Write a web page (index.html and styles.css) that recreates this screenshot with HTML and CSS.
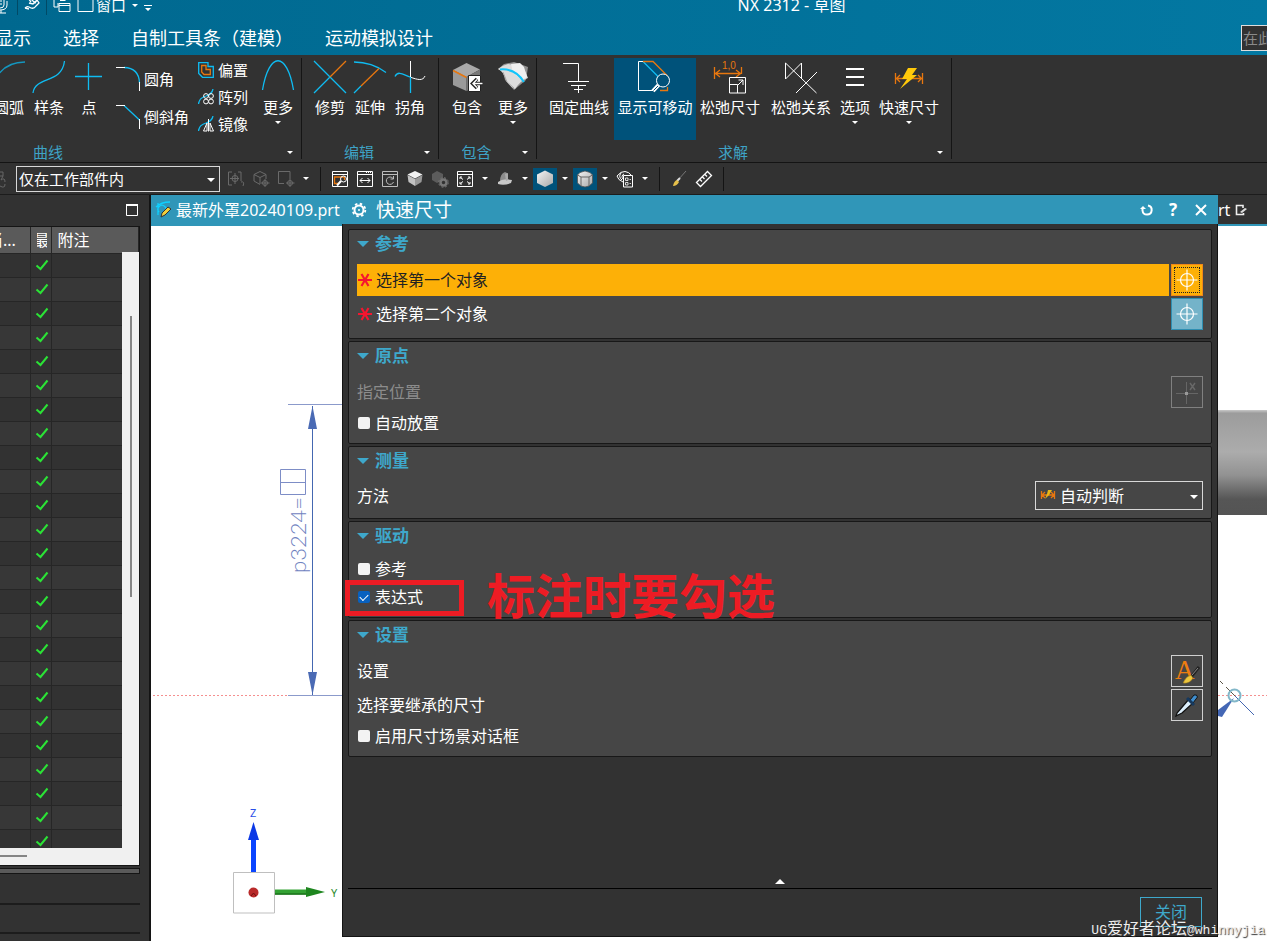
FILE: index.html
```html
<!DOCTYPE html>
<html lang="zh-CN">
<head>
<meta charset="utf-8">
<title>NX 2312 - 草图</title>
<link rel="stylesheet" href="styles.css">
</head>
<body>
<svg class="defs" aria-hidden="true">
  <defs>
    <symbol id="tick" viewBox="0 0 14 12"><path d="M1.500 6.500 L5.500 10 L12.500 1.500" fill="none" stroke="#2be336" stroke-width="2"/></symbol>
    <symbol id="required" viewBox="0 0 16 16"><path d="M1 8H15M4.500 2L11.500 14M11.500 2L4.500 14" fill="none" stroke="#f5152f" stroke-width="2.200"/></symbol>
    <symbol id="target" viewBox="0 0 22 22"><circle cx="11" cy="11" r="6.500" fill="none" stroke="#fff" stroke-width="1.200"/><path d="M0.500 11H21.500M11 0.500V21.500" stroke="#fff" stroke-width="1.200"/></symbol>
    <linearGradient id="shaft" x1="0" y1="0" x2="0" y2="1">
      <stop offset="0" stop-color="#c8c8c8"/><stop offset=".03" stop-color="#9c9c9c"/><stop offset=".4" stop-color="#acacac"/><stop offset=".62" stop-color="#929292"/><stop offset=".85" stop-color="#565656"/><stop offset="1" stop-color="#545454"/>
    </linearGradient>
    <linearGradient id="cube" x1="0" y1="0" x2="1" y2="1"><stop offset="0" stop-color="#f4f4f4"/><stop offset="1" stop-color="#a9a9a9"/></linearGradient>
  </defs>
</svg>

<header class="app-head">
  <div class="title-row">
    <button class="quick" aria-label="语音"><svg width="11" height="20" viewBox="0 0 11 20"><path d="M4 3v7q0 3 -4 3M7 6v4q0 5-7 5M-2 18H6M1 15v3M0 6h2M0 9h2" fill="none" stroke="#fff"/></svg></button>
    <i class="quick-sep"></i>
    <button class="quick" aria-label="选择方式"><svg width="16" height="20" viewBox="0 0 16 20"><path d="M1 13q2-2 4-1l2 1q3 1 5-2l3-3-2-3-4 4-4-1M4 3l3 4M10 1l3 4-2 3-4-4zM1 13l4 1" fill="none" stroke="#fff" stroke-width="1.300"/></svg></button>
    <i class="quick-sep"></i>
    <button class="quick" aria-label="切换窗口"><svg width="18" height="20" viewBox="0 0 18 20"><path d="M1 3v9h4M1 3h11v3M5 12V8M6 8.500h11v8H6zM6 10.500h11M7 5.500h5" fill="none" stroke="#fff"/></svg></button>
    <button class="quick quick-window"><svg width="17" height="20" viewBox="0 0 17 20"><path d="M1 3.500h15v13H1z" fill="none" stroke="#fff"/></svg><span>窗口</span><i class="caret"></i></button>
    <button class="quick" aria-label="更多命令"><svg width="8" height="20" viewBox="0 0 8 20"><path d="M0 10h8v1H0zM1 13h6L4 16z" fill="#fff"/></svg></button>
    <h1 class="app-title">NX 2312 - 草图</h1>
  </div>
  <nav class="menu-row">
    <div class="menu-list"><button>显示</button><button>选择</button><button>自制工具条（建模）</button><button>运动模拟设计</button></div>
    <input class="command-search" type="text" placeholder="在此键入命令" aria-label="搜索命令">
  </nav>
</header>

<section class="ribbon">
  <div class="group group-curve">
    <div class="group-items">
      <button class="tool w40"><svg viewBox="0 0 36 36"><path d="M3 22Q12 2 34 2" fill="none" stroke="#1497c0" stroke-width="1.300"/></svg><span>圆弧</span></button>
      <button class="tool w40"><svg viewBox="0 0 36 36"><path d="M2 33C4 16 31 24 33.500 1" class="c"/></svg><span>样条</span></button>
      <button class="tool w40"><svg viewBox="0 0 36 36"><path d="M17.500 3V30M4 16.500H31" class="c"/></svg><span>点</span></button>
      <div class="stack stack-two">
        <button><svg width="26" height="26" viewBox="0 0 26 26"><path d="M8 1.500Q23 2 23.500 17" class="c"/><path d="M0 1.500H9M23.500 16V25" class="w"/></svg><span>圆角</span></button>
        <button><svg width="26" height="26" viewBox="0 0 26 26"><path d="M8 1.500L23.500 16" class="c"/><path d="M0 1.500H9M23.500 15V25" class="w"/></svg><span>倒斜角</span></button>
      </div>
      <div class="stack stack-three">
        <button><svg width="16" height="16" viewBox="0 0 16 16"><path d="M.7.700H10V4.500H15.300V15.300H4.500L.7 11.500z" class="c" stroke-width="1.500"/><path d="M3.700 3.500H8V7.500H12.300V12.500H6L3.700 10z" class="o" stroke-width="1.500"/></svg><span>偏置</span></button>
        <button><svg width="16" height="16" viewBox="0 0 16 16"><path d="M.5 15Q1 9 8 7Q14 5 15 0" class="c"/><g class="w"><circle cx="8" cy="7" r="2.400"/><circle cx="13" cy="7" r="2.400"/><circle cx="8" cy="12.500" r="2.400"/><circle cx="13" cy="12.500" r="2.400"/></g></svg><span>阵列</span></button>
        <button><svg width="16" height="16" viewBox="0 0 16 16"><path d="M.5 15Q1 9 8 7Q14 5 15 0" class="c"/><path d="M10.500 3V15.500" class="w"/><path d="M5.500 15L9 7V15zM15.500 15L12 7V15z" class="w"/></svg><span>镜像</span></button>
      </div>
      <button class="tool w40"><svg viewBox="0 0 36 36"><path d="M2.500 30C9 -9 27 -9 33.500 30" class="c"/></svg><span>更多</span><i class="caret"></i></button>
    </div>
    <div class="group-foot"><span>曲线</span><i class="caret"></i></div>
  </div>

  <div class="group group-edit">
    <div class="group-items">
      <button class="tool w40"><svg viewBox="0 0 36 36"><path d="M2 1L34 33M18 17L2 33" class="c"/><path d="M34 1L18 17" class="o"/></svg><span>修剪</span></button>
      <button class="tool w40"><svg viewBox="0 0 36 36"><path d="M2 2Q20 2 34 12.500M9 26L2 33" class="c"/><path d="M27 8.500L9 26" class="o"/></svg><span>延伸</span></button>
      <button class="tool w40"><svg viewBox="0 0 36 36"><path d="M18.500 1V17M18 17C26 20 31 21 33 16" class="w"/><path d="M3 16.500C6 10 12 15 18 17M18.500 17V33" class="c"/></svg><span>拐角</span></button>
    </div>
    <div class="group-foot"><span>编辑</span><i class="caret"></i></div>
  </div>

  <div class="group group-include">
    <div class="group-items">
      <button class="tool w46"><svg viewBox="0 0 36 36"><path d="M17.500 3L31 9.500 17.500 17 4 10z" fill="#a9a9a9"/><path d="M4 10L17.500 17V31L4 25z" fill="#9a9a9a"/><path d="M31 9.500L17.500 17V31L31 25z" fill="#787878"/><path d="M4 10.500L17.500 17.500" stroke="#e8770f" stroke-width="1.500"/><path d="M19.500 15.500H31.500V31.500H19.500z" fill="#fff" stroke="#222"/><path d="M34 23.500H24M28 19L23.500 23.500 28 28" fill="none" stroke="#222" stroke-width="3.500"/><path d="M33.500 23.500H24M28 19.500L24 23.500 28 27.500" fill="none" stroke="#fff" stroke-width="1.400"/></svg><span>包含</span></button>
      <button class="tool w46"><svg viewBox="0 0 36 36"><path d="M9 4L19 2 25 4 33 7 31 20 19 30 10 20 8 12 3 9z" fill="#8f8f8f"/><path d="M3 9Q8 5 13 4L27 6Q31 12 33 18Q26 20 20 29Q14 26 11 20Q9 12 3 9z" fill="#dcdcdc"/><path d="M16 4L25 3 29 7 32 17 27 20 18 13z" fill="#efefef"/><path d="M8 12L12 22 19 28" fill="none" stroke="#a8a8a8"/><path d="M5 9.500Q20 8 29 22" fill="none" stroke="#12c5fb" stroke-width="2"/></svg><span>更多</span><i class="caret"></i></button>
    </div>
    <div class="group-foot"><span>包含</span><i class="caret"></i></div>
  </div>

  <div class="group group-solve">
    <div class="group-items">
      <button class="tool w70"><svg viewBox="0 0 36 36"><path d="M2 3.500H17.500V21M7 21.500H28M10 25.500H25M13 29.500H22M17.500 25V33" class="w"/></svg><span>固定曲线</span></button>
      <button class="tool tool-on"><svg viewBox="0 0 36 36"><path d="M6 1.500H1.500V30.500H17" class="w"/><path d="M6 1.500L21 16.500" class="c" stroke-width="1.800"/><path d="M6 1.500H16L30.500 16M23 30.500H30.500V27" class="o"/><circle cx="26" cy="20.500" r="6.500" class="w" fill="#00527a"/><path d="M21.500 25L16 31" stroke="#fff" stroke-width="4"/><path d="M21 26L16.500 30.500" stroke="#00527a"/></svg><span>显示可移动</span></button>
      <button class="tool w68"><svg viewBox="0 0 36 36"><path d="M2.500 7V19M29.500 7V14M3 13.500H29M8 10L3.500 13.500 8 17M24 10L28.500 13.500 24 17" class="o"/><text x="10" y="9" class="dim-label">1,0</text><path d="M17.500 17.500H33.500V33H17.500zM17.500 24.500H25.500V33M26 25L31 20M26.500 20H31V25" class="w" fill="#323232"/></svg><span>松弛尺寸</span></button>
      <button class="tool w74"><svg viewBox="0 0 36 36"><path d="M2.500 19V3L33.500 33M2.500 19L18.500 3V19M34 12L13 33" class="w"/></svg><span>松弛关系</span></button>
      <button class="tool w34"><svg viewBox="0 0 36 36"><path d="M9 9H27M9 17H27M9 25H27" class="w" stroke-width="2"/></svg><span>选项</span><i class="caret"></i></button>
      <button class="tool w74"><svg viewBox="0 0 36 36"><path d="M4.500 13V24M31.500 13V24M5 18.500H31M9 15L5.500 18.500 9 22M27 15L30.500 18.500 27 22" class="o"/><path d="M17 8H26L21 15H26L9 29 16 19H11z" fill="#ffc90a"/></svg><span>快速尺寸</span><i class="caret"></i></button>
    </div>
    <div class="group-foot"><span>求解</span><i class="caret"></i></div>
  </div>
</section>

<section class="toolbar">
  <span class="tb-edge"><svg width="16" height="20" viewBox="0 0 16 20"><path d="M0 3h3v4H0M1 11q4-3 4 2M0 17q5 3 5-2M3 7l-2 4" fill="none" stroke="#666"/></svg></span>
  <span class="pick scope"><select aria-label="选择范围"><option>仅在工作部件内</option></select></span>
  <button class="tb dim" aria-label="点捕捉"><svg width="18" height="18" viewBox="0 0 18 18"><path d="M5 2H1.500V15H5M11 2h3v9M8 3V14M3 8.500H12M14 12q4-1 2 4" class="g"/><circle cx="8" cy="8.500" r="3" class="g"/></svg></button>
  <button class="tb dim" aria-label="实体捕捉"><svg width="18" height="18" viewBox="0 0 18 18"><path d="M8 1.500L14 4.500V9M8 1.500L2 4.500V11L8 14.500M2 4.500L8 7.500 14 4.500M8 7.500V14M13 9V17M9 13H17.500" class="g"/><circle cx="13" cy="13" r="2.500" class="g"/></svg></button>
  <button class="tb dim" aria-label="区域捕捉"><svg width="18" height="18" viewBox="0 0 18 18"><path d="M7 13.500H1.500V1.500H13V8M13 8V17M9 13H17.500" class="g"/><circle cx="13" cy="13" r="2.500" class="g"/></svg></button>
  <button class="tb-caret" aria-label="更多捕捉"><i class="caret"></i></button>
  <i class="tb-sep"></i>
  <button class="tb" aria-label="缩放窗口"><svg width="18" height="18" viewBox="0 0 18 18"><path d="M1.500 1.500H16.500V16.500H1.500zM1.500 4.500H16.500" class="w"/><path d="M8 13.500H3.500V7H13.500V10" class="o" stroke-width="1.800"/><circle cx="12.500" cy="9" r="3" class="w"/><path d="M10 11L6 15.500" stroke="#fff" stroke-width="2"/></svg></button>
  <button class="tb" aria-label="适合宽度"><svg width="18" height="18" viewBox="0 0 18 18"><path d="M1.500 1.500H16.500V16.500H1.500zM1.500 4.500H16.500M4 10.500H14M6.500 8L4 10.500 6.500 13M11.500 8L14 10.500 11.500 13" class="w"/><path d="M10 2.500h5" stroke="#fff" stroke-dasharray="1 1"/></svg></button>
  <button class="tb" aria-label="重画"><svg width="18" height="18" viewBox="0 0 18 18"><path d="M1.500 1.500H16.500V16.500H1.500zM1.500 4.500H16.500M12 8.500A3.700 3.700 0 1 0 12.500 12M12.500 6V9H9.500" fill="none" stroke="#bdbdbd"/></svg></button>
  <button class="tb" aria-label="视图方位"><svg width="18" height="18" viewBox="0 0 18 18"><path d="M9 1L16.500 4.500 9 8.500 1.500 4.500z" fill="#f3f3f3"/><path d="M1.500 5L9 9V16L2.500 12z" fill="#c2c2c2"/><path d="M16.500 5L9 9V16L15.500 12z" fill="#999"/></svg></button>
  <button class="tb" aria-label="装配设置"><svg width="18" height="18" viewBox="0 0 18 18"><path d="M6 1L12 4V10L6 13 1 10V4z" fill="#5c5c5c"/><circle cx="12.500" cy="12.500" r="3" fill="none" stroke="#777" stroke-width="2.500"/><circle cx="12.500" cy="12.500" r="4.800" fill="none" stroke="#777" stroke-dasharray="2 1.770"/></svg></button>
  <button class="tb" aria-label="全屏"><svg width="18" height="18" viewBox="0 0 18 18"><path d="M1.500 1.500H16.500V16.500H1.500zM1.500 4.500H16.500M4 9V7H6M12 7h2v2M4 12v2H6M12 14h2V12M4.500 7.500l2.500 2M13.500 7.500l-2.500 2M4.500 13.500l2.500-2M13.500 13.500l-2.500-2" class="w"/></svg></button>
  <button class="tb-caret" aria-label="更多视图"><i class="caret"></i></button>
  <button class="tb" aria-label="剖切"><svg width="18" height="18" viewBox="0 0 18 18"><path d="M4 11Q4 4 9 2L11 3V11z" fill="#8c8c8c"/><path d="M2 12Q7 8 16 10L15 13Q8 16 2 14z" fill="#c9c9c9"/><path d="M9 4L12 3 12 10 10 11z" fill="#aaa"/></svg></button>
  <button class="tb-caret" aria-label="更多剖切"><i class="caret"></i></button>
  <button class="tb on" aria-label="着色"><svg width="20" height="20" viewBox="0 0 20 20"><path d="M10 1.500L18 5.500V14L10 18 2 14V5.500z" fill="url(#cube)"/></svg></button>
  <button class="tb-caret" aria-label="更多着色"><i class="caret"></i></button>
  <button class="tb on" aria-label="带边着色"><svg width="20" height="20" viewBox="0 0 20 20"><path d="M10 2L15 3.500 17.500 6V14L14 17 10 18 6 17 2.500 14V6L5 3.500z" fill="url(#cube)" stroke="#555" stroke-width=".8"/><path d="M2.500 6L6 8H14L17.500 6M6 8V17M14 8V17" fill="none" stroke="#666"/></svg></button>
  <button class="tb-caret" aria-label="更多边"><i class="caret"></i></button>
  <button class="tb" aria-label="显示隐藏"><svg width="18" height="18" viewBox="0 0 18 18"><path d="M7 12Q2 10 1 6Q5 1 9 1.500Q13 2 15 5M5 3Q2 7 6 10M8 4a3 3 0 0 0-1 5" class="w"/><path d="M7.500 5.500H16.500V17H7.500z" class="w" fill="#323232"/><path d="M9.500 8H12V10.500H9.500zM9.500 12.500H12V15H9.500zM13.500 9.500h1.500M13.500 13.500h1.500" class="w" stroke-width=".8"/></svg></button>
  <button class="tb-caret" aria-label="更多显示"><i class="caret"></i></button>
  <i class="tb-sep"></i>
  <button class="tb" aria-label="编辑显示"><svg width="18" height="18" viewBox="0 0 18 18"><path d="M16 1L8 10" stroke="#777"/><path d="M10 8L7 11" stroke="#ddd" stroke-width="2"/><path d="M7 10Q4 11 3 16Q7 16 9 12z" fill="#e6c04a"/></svg></button>
  <button class="tb" aria-label="测量"><svg width="18" height="18" viewBox="0 0 18 18"><path d="M1.500 12.500L12.500 1.500 16.500 5.500 5.500 16.500zM5 9.500l2 2M7.500 7l2 2M10 4.500l2 2" fill="none" stroke="#fff" stroke-width="1.300"/></svg></button>
  <i class="tb-sep"></i>
</section>

<main class="work">
  <aside class="navigator">
    <div class="nav-head"><button aria-label="最大化"><svg width="12" height="12" viewBox="0 0 12 12"><path d="M.5 1H11.500V11.500H.5z" fill="none" stroke="#fff"/><path d="M0 1H12" stroke="#fff" stroke-width="2"/></svg></button></div>
    <div class="nav-list">
      <table>
        <thead><tr><th class="col-a"><span>当...</span></th><th class="col-b"><span>最</span></th><th class="col-c">附注</th></tr></thead>
        <tbody>
          <tr><td></td><td><svg><use href="#tick"/></svg></td><td></td></tr>
          <tr><td></td><td><svg><use href="#tick"/></svg></td><td></td></tr>
          <tr><td></td><td><svg><use href="#tick"/></svg></td><td></td></tr>
          <tr><td></td><td><svg><use href="#tick"/></svg></td><td></td></tr>
          <tr><td></td><td><svg><use href="#tick"/></svg></td><td></td></tr>
          <tr><td></td><td><svg><use href="#tick"/></svg></td><td></td></tr>
          <tr><td></td><td><svg><use href="#tick"/></svg></td><td></td></tr>
          <tr><td></td><td><svg><use href="#tick"/></svg></td><td></td></tr>
          <tr><td></td><td><svg><use href="#tick"/></svg></td><td></td></tr>
          <tr><td></td><td><svg><use href="#tick"/></svg></td><td></td></tr>
          <tr><td></td><td><svg><use href="#tick"/></svg></td><td></td></tr>
          <tr><td></td><td><svg><use href="#tick"/></svg></td><td></td></tr>
          <tr><td></td><td><svg><use href="#tick"/></svg></td><td></td></tr>
          <tr><td></td><td><svg><use href="#tick"/></svg></td><td></td></tr>
          <tr><td></td><td><svg><use href="#tick"/></svg></td><td></td></tr>
          <tr><td></td><td><svg><use href="#tick"/></svg></td><td></td></tr>
          <tr><td></td><td><svg><use href="#tick"/></svg></td><td></td></tr>
          <tr><td></td><td><svg><use href="#tick"/></svg></td><td></td></tr>
          <tr><td></td><td><svg><use href="#tick"/></svg></td><td></td></tr>
          <tr><td></td><td><svg><use href="#tick"/></svg></td><td></td></tr>
          <tr><td></td><td><svg><use href="#tick"/></svg></td><td></td></tr>
          <tr><td></td><td><svg><use href="#tick"/></svg></td><td></td></tr>
          <tr><td></td><td><svg><use href="#tick"/></svg></td><td></td></tr>
          <tr><td></td><td><svg><use href="#tick"/></svg></td><td></td></tr>
          <tr><td></td><td><svg><use href="#tick"/></svg></td><td></td></tr>
        </tbody>
      </table>
      <div class="v-scroll"><i></i></div>
      <div class="h-scroll"><i></i></div>
    </div>
    <div class="nav-split"></div>
    <div class="nav-fold"></div>
    <div class="nav-fold"></div>
  </aside>

  <section class="view">
    <div class="tabs">
      <button class="tab tab-on"><svg width="18" height="18" viewBox="0 0 18 18"><path d="M3 2V14M1 6Q6 1 15 1M4 11a4 4 0 1 1 6 0" fill="none" stroke="#0fd0ff" stroke-width="1.300"/><path d="M6 16L7 12 13 6 16 8 10 14z" fill="#f2cf3a" stroke="#333"/></svg><span>最新外罩20240109.prt</span></button>
      <button class="tab tab-last"><span>rt</span><svg width="12" height="12" viewBox="0 0 12 12"><path d="M7.500 1.500H1.500V10.500H8.500V9M2 1.500H8V4" fill="none" stroke="#eee" stroke-width="1.600"/><path d="M5 8L10 4 12 5 7 9z" fill="#ddd"/></svg></button>
    </div>
    <div class="canvas">
      <svg class="drawing-left" width="192" height="711" viewBox="0 0 192 711">
        <path d="M2 469.500H137" stroke="#f58f8f" stroke-dasharray="2 2"/>
        <path d="M137 178.500H192M137 469.500H192" stroke="#8b9acb"/>
        <path d="M161.500 180V469" stroke="#4467b1"/>
        <path d="M161.500 180L166 203H157zM161.500 469L166 446H157z" fill="#4a6ab4"/>
        <text class="dim-text" transform="translate(155 347) rotate(-90)">p3224=</text>
        <path d="M129.500 243.500H154.500V268.500H129.500zM129.500 256.500H154.500" fill="none" stroke="#7d8dc6"/>
        <path d="M102.500 646V614" stroke="#0a45ff" stroke-width="5"/><path d="M102.500 596L108 614H97z" fill="#0c39e6"/>
        <path d="M82.500 646.500H123.500V687H82.500z" fill="#fff" stroke="#bfbfbf"/>
        <circle cx="102.500" cy="666.500" r="5" fill="#b92a2a"/><path d="M102.500 667L100 670M102.500 667L105 670" fill="none" stroke="#701010"/>
        <path d="M124 666H156" stroke="#33a233" stroke-width="5"/><path d="M124 668H156" stroke="#1c721c" stroke-width="1.500"/><path d="M155 661L174 666 155 671z" fill="#1e861f"/>
        <text x="99" y="591" class="axis-z">Z</text><text x="180" y="671" class="axis-y">Y</text>
      </svg>
      <svg class="drawing-right" width="49" height="711" viewBox="0 0 49 711">
        <path d="M0 184H49V289H0z" fill="url(#shaft)"/>
        <path d="M0 469.500H49" stroke="#f58f8f" stroke-dasharray="2 2"/>
        <path d="M2 455L5 458M8 461L17 470" stroke="#5c5648"/><path d="M17 470L36 489" stroke="#4467b1"/>
        <path d="M16 472L0 484V490L4 491z" fill="#4467b5"/>
        <circle cx="16.500" cy="469.500" r="6" fill="none" stroke="#82b7c9" stroke-width="2"/>
      </svg>
    </div>

    <form class="dialog">
      <div class="dialog-head">
        <svg width="16" height="16" viewBox="0 0 16 16"><circle cx="8" cy="8" r="4.500" fill="none" stroke="#fff" stroke-width="2"/><circle cx="8" cy="8" r="6.300" fill="none" stroke="#fff" stroke-width="1.800" stroke-dasharray="2.500 2.450"/><circle cx="8" cy="8" r="1" fill="#fff"/></svg>
        <h2>快速尺寸</h2>
        <div class="dialog-tools">
          <button type="button" aria-label="重置"><svg width="14" height="14" viewBox="0 0 14 14"><path d="M2.500 5V7.500A4.600 4.600 0 1 0 8 2.500" fill="none" stroke="#fff" stroke-width="2"/><path d="M0 6L3 3 6 6z" fill="#fff"/></svg></button>
          <button type="button" class="help">?</button>
          <button type="button" aria-label="关闭窗口"><svg width="14" height="14" viewBox="0 0 14 14"><path d="M2 2L12 12M12 2L2 12" stroke="#fff" stroke-width="2"/></svg></button>
        </div>
      </div>
      <div class="dialog-body">
        <section class="panel panel-rows">
          <h3>参考</h3>
          <div class="row"><span class="field field-on"><svg width="16" height="16"><use href="#required"/></svg>选择第一个对象</span><button type="button" class="icon-btn pick-on" aria-label="选择第一个对象"><svg width="22" height="22"><use href="#target"/></svg></button></div>
          <div class="row"><span class="field"><svg width="16" height="16"><use href="#required"/></svg>选择第二个对象</span><button type="button" class="icon-btn pick-off" aria-label="选择第二个对象"><svg width="22" height="22"><use href="#target"/></svg></button></div>
        </section>
        <section class="panel">
          <h3>原点</h3>
          <div class="row"><span class="label label-off">指定位置</span><button type="button" class="icon-btn disabled" disabled aria-label="指定位置"><svg width="24" height="24" viewBox="0 0 24 24"><path d="M1 13.500H23M11.500 2V24" stroke="#666"/><path d="M15 3L20 10M20 3L15 10" stroke="#686868" stroke-width="1.500"/><path d="M10 12h3v3h-3z" fill="#999"/></svg></button></div>
          <label class="check"><input type="checkbox">自动放置</label>
        </section>
        <section class="panel panel-rows">
          <h3>测量</h3>
          <div class="row"><label class="label" for="method">方法</label>
            <span class="pick method"><svg width="16" height="12" viewBox="0 0 16 12"><path d="M1.500 2V10M14.500 2V10M2 6H14M5 3L2 6 5 9M11 3L14 6 11 9" class="o" stroke-width="1.500"/><path d="M8 1H12L9 6 5 10 7 5z" fill="#e9b818"/></svg><select id="method"><option>自动判断</option></select></span></div>
        </section>
        <section class="panel">
          <h3>驱动</h3>
          <label class="check"><input type="checkbox">参考</label>
          <label class="check"><input type="checkbox" checked>表达式</label>
        </section>
        <section class="panel">
          <h3>设置</h3>
          <div class="row"><span class="label">设置</span><button type="button" class="icon-btn" aria-label="设置"><svg width="28" height="28" viewBox="0 0 28 28"><text x="2" y="22" class="style-a">A</text><path d="M26 10L18 20" stroke="#222" stroke-width="3"/><path d="M25 11L19 18" stroke="#888"/><path d="M18 18Q13 19 10 26Q17 27 20 21z" fill="#edc63d" stroke="#8e6c14" stroke-width=".5"/></svg></button></div>
          <div class="row"><span class="label">选择要继承的尺寸</span><button type="button" class="icon-btn" aria-label="选择要继承的尺寸"><svg width="24" height="24" viewBox="0 0 24 24"><path d="M14 6L18 10 7 20 3 22 1 23 2 20z" fill="#dceefb" stroke="#111" stroke-width="1.300"/><path d="M15 7L19 2Q22 1 22.500 4L18 10z" fill="#3f8dcd" stroke="#111"/><path d="M12 5L19 12" stroke="#16395e" stroke-width="3"/></svg></button></div>
          <label class="check"><input type="checkbox">启用尺寸场景对话框</label>
        </section>
        <button type="button" class="collapse" aria-label="收起"><i></i></button>
        <div class="dialog-foot"><button type="button" class="close">关闭</button></div>
      </div>
      <div class="mark-box"></div>
      <p class="mark-text">标注时要勾选</p>
    </form>
    <p class="watermark"><span>UG</span>爱好者论坛<span>@whinnyjia</span></p>
  </section>
</main>
</body>
</html>
```
FILE: styles.css
```css
* { box-sizing: border-box; }
body {
  margin: 0;
  height: 100vh;
  display: flex;
  flex-direction: column;
  overflow: hidden;
  background: #323232;
  color: #fff;
  font: 16px/20px "Noto Sans", "Noto Sans CJK SC", sans-serif;
}
button, select, input { font: inherit; color: inherit; }
button { background: none; border: 0; padding: 0; }
svg { display: block; flex: none; }
h1, h2, h3, p { margin: 0; font-weight: 400; }
.defs { position: absolute; width: 0; height: 0; }
.c { fill: none; stroke: #0fbcf2; stroke-width: 1.300; }
.w { stroke: #fff; }
.w:not([fill]) { fill: none; }
.o { fill: none; stroke: #e8770f; stroke-width: 1.300; }
.g { fill: none; stroke: #6a6a6a; }
.caret {
  display: block;
  width: 0;
  height: 0;
  border: 3px solid transparent;
  border-top-color: #fff;
  border-bottom: 0;
}

/* Header */
.app-head { background: linear-gradient(90deg, #00688f, #0378a2); }
.title-row { display: flex; align-items: center; height: 20px; margin: -5px 0 5px; gap: 6px; font-size: 15px; }
.quick { display: flex; align-items: center; height: 20px; }
.quick-sep { width: 1px; height: 20px; background: #014a66; }
.quick-window { gap: 2px; }
.quick-window .caret { margin-left: 4px; }
.app-title { flex: 1; margin-left: 158px; text-align: center; font-size: 16px; }
.menu-row { display: flex; justify-content: space-between; align-items: center; height: 35px; font-size: 18px; }
.menu-list { display: flex; gap: 32px; margin-left: -5px; }
.command-search {
  width: 26px;
  height: 26px;
  padding: 0 0 0 1px;
  border: 1px solid #ddd;
  border-right: 0;
  background: #323232;
  font-size: 15px;
}
.command-search::placeholder { color: #8a8a8a; opacity: 1; }

/* Ribbon */
.ribbon { display: flex; height: 108px; padding: 3px 0; border-bottom: 1px solid #141414; font-size: 15px; }
.group { display: flex; flex-direction: column; border-right: 1px solid #151515; }
.group-items { display: flex; flex: none; height: 82px; }
.group-curve { width: 302px; }
.group-curve .group-items { margin-left: -11px; }
.group-edit { width: 137px; }
.group-edit .group-items { padding-left: 8px; }
.group-include { width: 98px; }
.group-include .group-items { padding-left: 5px; }
.group-solve { width: 415px; }
.group-solve .group-items { padding-left: 7px; }
.group-foot { display: flex; align-items: center; height: 20px; padding: 4px 8px 0 0; color: #3ea3c6; }
.group-foot span { flex: 1; text-align: center; padding-right: 8px; }
.group-curve .group-foot span { text-align: left; padding-left: 33px; }
.tool { display: flex; flex-direction: column; align-items: center; padding-top: 2px; white-space: nowrap; }
.tool > svg { width: 36px; height: 36px; }
.tool span { line-height: 22px; }
.tool .caret { margin-top: 3px; }
.tool-on { width: 82px; background: #00527a; }
.w34 { width: 34px; }
.w40 { width: 40px; }
.w46 { width: 46px; }
.w68 { width: 68px; }
.w70 { width: 70px; }
.w74 { width: 74px; }
.stack { display: flex; flex-direction: column; }
.stack button { display: flex; align-items: center; white-space: nowrap; }
.stack-two { width: 82px; gap: 12px; padding: 8px 0 0 7px; }
.stack-two button { gap: 2px; height: 26px; }
.stack-three { width: 67px; gap: 7px; padding: 2px 0 0 7px; }
.stack-three button { gap: 4px; height: 20px; }
.dim-label { fill: #e8770f; font: 10px "Liberation Sans", sans-serif; }

/* Toolbar */
.toolbar { display: flex; align-items: center; gap: 1px; height: 32px; border-bottom: 1px solid #1c1c1c; }
.tb-edge { width: 15px; }
.pick { position: relative; display: block; }
.pick select { appearance: none; width: 100%; height: 100%; padding: 0 24px 0 2px; border: 1px solid #d8d8d8; border-radius: 0; background: #323232; outline: 0; }
.pick::after { content: ""; position: absolute; right: 5px; top: 50%; border: 4px solid transparent; border-top-color: #fff; border-bottom: 0; margin-top: -1px; }
.scope { width: 204px; height: 26px; margin-right: 3px; font-size: 15px; }
.tb { display: flex; align-items: center; justify-content: center; width: 24px; height: 22px; }
.tb.on { background: #00527a; }
.tb-caret { display: flex; align-items: center; justify-content: center; width: 14px; height: 22px; }
.tb-sep { width: 1px; height: 24px; margin: 0 6px; background: #141414; }

/* Navigator */
.work { flex: 1; display: flex; min-height: 0; }
.navigator { width: 151px; border-right: 2px solid #141414; padding-right: 9px; display: flex; flex-direction: column; }
.nav-head { display: flex; justify-content: flex-end; align-items: flex-start; height: 31px; padding: 9px 2px 0 0; }
.nav-list { display: grid; grid-template-columns: 1fr 17px; flex: 1; min-height: 0; border: solid #151515; border-width: 1px 1px 1px 0; grid-template-rows: minmax(0, 1fr) 17px; overflow: hidden; }
.nav-list table { grid-column: 1 / 3; grid-row: 1; width: 100%; border-collapse: collapse; table-layout: fixed; align-self: start; }
.nav-list th { height: 26px; padding: 0; background: #5a5a5a; border-right: 1px solid #262626; border-bottom: 1px solid #262626; font-weight: 400; text-align: left; white-space: nowrap; overflow: hidden; }
.nav-list td { height: 24px; padding: 0 0 0 4px; border-right: 1px solid #262626; border-bottom: 1px solid #262626; }
.nav-list tr:nth-child(even) td { background: #373737; }
.nav-list td svg { width: 14px; height: 12px; }
.nav-list .col-a { width: 30px; }
.nav-list .col-a span { display: block; margin-left: -13px; }
.nav-list .col-b { width: 21px; }
.nav-list .col-b span { display: flex; justify-content: center; width: 10px; margin-left: 6px; overflow: hidden; }
.nav-list .col-c { padding-left: 6px; }
.v-scroll { grid-column: 2; grid-row: 1; z-index: 1; margin-top: 25px; padding: 64px 8px 0; background: #f0f0f0; }
.v-scroll i { display: block; width: 2px; height: 281px; background: #858585; }
.h-scroll { grid-column: 1 / 3; grid-row: 2; padding-top: 7px; background: #f0f0f0; }
.h-scroll i { display: block; width: 27px; height: 2px; background: #858585; }
.nav-split { height: 6px; margin: 2px 0 29px; background: #5a5a5a; border: 1px solid #151515; border-left: 0; }
.nav-fold { height: 2px; margin-bottom: 27px; background: #1c1c1c; }
.nav-fold:last-child { margin-bottom: 7px; }

/* Graphics view */
.view { position: relative; flex: 1; display: flex; flex-direction: column; min-width: 0; }
.tabs { display: flex; justify-content: space-between; height: 31px; border-bottom: 2px solid #3096b8; }
.tab { display: flex; align-items: center; gap: 3px; white-space: nowrap; }
.tab-on { padding: 0 4px; background: #3096b8; width: 200px; }
.tab-last { width: 49px; gap: 5px; }
.canvas { flex: 1; display: flex; justify-content: space-between; background: #fff; overflow: hidden; }
.dim-text { fill: #6f82c0; font: 300 22px "Lato", sans-serif; }
.axis-z, .axis-y { fill: #2a4fe8; font: 11px "Noto Sans", sans-serif; }
.axis-y { fill: #2c8a2c; }

/* Dialog */
.dialog { position: absolute; inset: 0 49px 4px 191px; display: flex; flex-direction: column; background: #323232; }
.dialog-head { display: flex; align-items: center; gap: 9px; height: 29px; padding: 0 10px 0 9px; background: #3096b8; }
.dialog-head h2 { flex: 1; font-size: 19px; line-height: 28px; }
.dialog-tools { display: flex; gap: 12px; }
.dialog-tools button { width: 14px; height: 20px; display: flex; align-items: center; justify-content: center; }
.dialog-tools .help { font-weight: 700; font-size: 17px; }
.dialog-tools button:last-child { margin-left: 2px; }
.dialog-body { flex: 1; display: flex; flex-direction: column; gap: 2px; padding: 5px 5px 0; border: 1px solid #141414; border-top: 0; }
.panel { display: flex; flex-direction: column; gap: 2px; padding: 0 8px 7px; border: 1px solid #181818; border-radius: 2px; background: #464646; }
.panel-rows { padding-bottom: 8px; }
.panel h3 { display: flex; align-items: center; gap: 6px; height: 28px; margin-bottom: 4px; color: #3ea8cb; font-size: 17px; font-weight: 700; }
.panel h3::before { content: ""; border: 6px solid transparent; border-top-color: #3ea8cb; border-bottom: 0; }
.row { display: flex; align-items: center; gap: 2px; }
.field { flex: 1; display: flex; align-items: center; height: 32px; gap: 3px; }
.field-on { background: #fdb007; color: #222; }
.label { flex: 1; }
.label-off { color: #8c8c8c; }
.icon-btn { width: 32px; height: 32px; display: flex; align-items: center; justify-content: center; border: 1px solid #d0d0d0; }
.pick-on { background: #fdb007; border-color: #f0871a; outline: 1px dotted #222; outline-offset: -4px; }
.pick-off { background: #74b3c9; border-color: #2f8fb2; }
.disabled { border-color: #808080; }
.style-a { fill: #ee7d10; font: 27px "Liberation Serif", serif; }
.check { display: flex; align-items: center; gap: 5px; height: 26px; }
.check input { appearance: none; width: 12px; height: 12px; margin: 0 0 0 1px; border-radius: 2px; background: #f3f3f3; display: grid; place-items: center; }
.check input:checked { background: #0861c0; }
.check input:checked::before { content: ""; width: 7px; height: 4px; border: solid #fff; border-width: 0 0 1px 1px; transform: rotate(-45deg); margin-bottom: 2px; }
.method { width: 168px; height: 29px; }
.method svg { position: absolute; left: 5px; top: 8px; }
.method select { padding-left: 24px; background: #464646; }
.collapse { display: flex; align-items: flex-end; justify-content: center; flex: 1; padding-bottom: 2px; }
.collapse i { border: 5px solid transparent; border-bottom-color: #fff; border-top: 0; }
.dialog-foot { display: flex; justify-content: flex-end; height: 48px; padding: 8px 10px 0; border-top: 1px solid #000; }
.close { width: 62px; height: 30px; border: 1px solid #3ea8cb; color: #3ea8cb; }
.mark-box { position: absolute; left: 3px; top: 385px; width: 119px; height: 36px; border: 5px solid #ed1c24; }
.mark-text { position: absolute; left: 145px; top: 371px; color: #ed1c24; font-size: 48px; font-weight: 700; line-height: 60px; }
.watermark { position: absolute; right: 2px; bottom: 0; color: #eee; text-shadow: 1px 1px 1px #333; }
.watermark span { font: 13px/20px "Liberation Mono", monospace; }
```
